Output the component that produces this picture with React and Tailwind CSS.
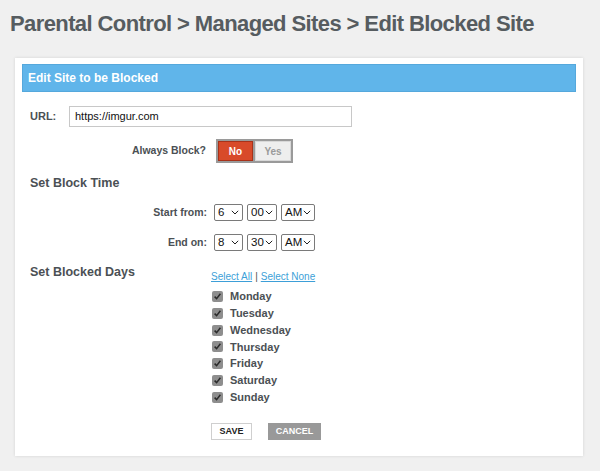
import React, { useState } from 'react';

const days = ['Monday', 'Tuesday', 'Wednesday', 'Thursday', 'Friday', 'Saturday', 'Sunday'];

const Chevron = () => (
  <svg width="8" height="5" viewBox="0 0 8 5" className="shrink-0">
    <path d="M0.8 0.8 L4 4 L7.2 0.8" fill="none" stroke="#222" strokeWidth="1" />
  </svg>
);

const FakeSelect = ({ value, width }) => (
  <div
    className="h-[17px] border border-[#7a7a7a] rounded-[2px] bg-white flex items-center justify-between pl-[3px] pr-[3px] text-[11.5px] text-[#111]"
    style={{ width }}
  >
    <span>{value}</span>
    <Chevron />
  </div>
);

const Check = () => (
  <div className="w-[11px] h-[11px] rounded-[2px] bg-[#8e8e8e] flex items-center justify-center">
    <svg width="9" height="9" viewBox="0 0 9 9">
      <path d="M1.6 4.6 L3.6 6.6 L7.4 1.8" fill="none" stroke="#2a2a2a" strokeWidth="1.5" />
    </svg>
  </div>
);

const App = () => {
  const [always, setAlways] = useState(false);

  return (
    <div className="min-h-screen w-full bg-[#f0f0f0] font-['Liberation_Sans',Arial,sans-serif] pb-[14px]">
      <h1 className="pl-[10px] pt-[11px] text-[22px] leading-[26px] font-bold text-[#565c60] tracking-[-0.6px]">
        Parental Control &gt; Managed Sites &gt; Edit Blocked Site
      </h1>

      <div className="ml-[15px] mt-[21px] w-[568px] bg-white shadow-[0_0_3px_rgba(0,0,0,0.12)] pt-[6px] px-[7px] pb-[16px]">
        <div className="h-[28px] bg-[#60b5ea] border border-[#55a8dc] flex items-center pl-[5px] text-white text-[12px] font-bold">
          Edit Site to be Blocked
        </div>

        <div className="pl-[8px] text-[#4b5054]">
          {/* URL */}
          <div className="mt-[14px] flex items-center">
            <span className="w-[39px] text-[11px] font-bold">URL:</span>
            <div className="w-[283px] h-[21px] border border-[#c8c8c8] flex items-center pl-[5px] text-[11px] text-[#111]">
              https://imgur.com
            </div>
          </div>

          {/* Always Block */}
          <div className="mt-[12px] flex items-center">
            <span className="w-[176px] text-right text-[10.5px] font-bold">Always Block?</span>
            <div className="ml-[10px] flex border-2 border-[#9a9a9a] bg-[#9a9a9a] gap-[2px]">
              <button
                onClick={() => setAlways(false)}
                className={`w-[35px] h-[20px] text-[10px] font-bold border ${!always ? 'bg-[#d84a2a] border-[#a8321a] text-white' : 'bg-[#eeeeee] border-[#d8d8d8] text-[#9a9a9a]'}`}
              >
                No
              </button>
              <button
                onClick={() => setAlways(true)}
                className={`w-[36px] h-[20px] text-[10px] font-bold border ${always ? 'bg-[#d84a2a] border-[#a8321a] text-white' : 'bg-[#eeeeee] border-[#d8d8d8] text-[#9a9a9a]'}`}
              >
                Yes
              </button>
            </div>
          </div>

          {/* Block time */}
          <div className="mt-[12px] text-[12.5px] font-bold leading-[16px]">Set Block Time</div>

          <div className="mt-[13px] flex items-center">
            <span className="w-[177px] text-right text-[10.5px] font-bold">Start from:</span>
            <div className="ml-[7px] flex gap-[4px]">
              <FakeSelect value="6" width={29} />
              <FakeSelect value="00" width={30} />
              <FakeSelect value="AM" width={34} />
            </div>
          </div>

          <div className="mt-[13px] flex items-center">
            <span className="w-[177px] text-right text-[10.5px] font-bold">End on:</span>
            <div className="ml-[7px] flex gap-[4px]">
              <FakeSelect value="8" width={29} />
              <FakeSelect value="30" width={30} />
              <FakeSelect value="AM" width={34} />
            </div>
          </div>

          {/* Blocked days */}
          <div className="mt-[13px] flex">
            <div className="w-[181px] text-[12.5px] font-bold leading-[16px]">Set Blocked Days</div>
            <div className="pt-[7px]">
              <div className="text-[10px] leading-[12px] text-[#3d9fd8]">
                <a href="#" className="underline">Select All</a>
                <span className="text-[#555] mx-[3px]">|</span>
                <a href="#" className="underline">Select None</a>
              </div>
              <div className="mt-[8px] flex flex-col gap-[5.8px] pl-[1px]">
                {days.map((d) => (
                  <label key={d} className="flex items-center h-[11px]">
                    <Check />
                    <span className="ml-[7px] text-[11px] font-bold">{d}</span>
                  </label>
                ))}
              </div>
              <div className="mt-[20px] flex gap-[16px]">
                <button className="w-[41px] h-[17px] bg-white border border-[#cfcfcf] text-[9px] font-bold text-[#222]">
                  SAVE
                </button>
                <button className="w-[53px] h-[17px] bg-[#999999] text-[9px] font-bold text-white">
                  CANCEL
                </button>
              </div>
            </div>
          </div>
        </div>
      </div>
    </div>
  );
};

export default App;
